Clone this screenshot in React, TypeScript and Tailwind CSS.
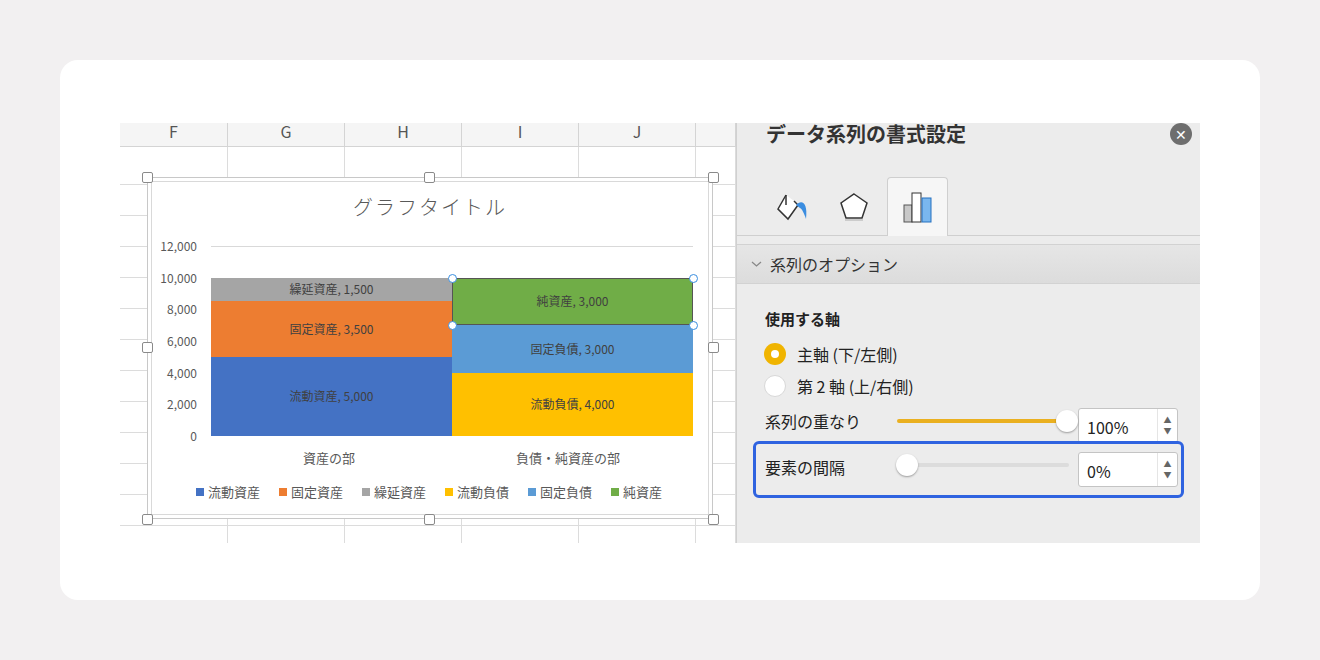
import React from "react";

const F = { fontFamily: '"Noto Sans CJK JP","Noto Sans",sans-serif' };

function Chart() {
  const y = (v: number) => 436 - (v / 2000) * 31.7;
  const segs = [
    { x: 211, w: 241, from: 0, to: 5000, c: "#4472c4", t: "流動資産, 5,000" },
    { x: 211, w: 241, from: 5000, to: 8500, c: "#ed7d31", t: "固定資産, 3,500" },
    { x: 211, w: 241, from: 8500, to: 10000, c: "#a5a5a5", t: "繰延資産, 1,500" },
    { x: 452, w: 241, from: 0, to: 4000, c: "#ffc000", t: "流動負債, 4,000" },
    { x: 452, w: 241, from: 4000, to: 7000, c: "#5b9bd5", t: "固定負債, 3,000" },
    { x: 452, w: 241, from: 7000, to: 10000, c: "#70ad47", t: "純資産, 3,000" },
  ];
  const legend = [
    ["#4472c4", "流動資産"], ["#ed7d31", "固定資産"], ["#a5a5a5", "繰延資産"],
    ["#ffc000", "流動負債"], ["#5b9bd5", "固定負債"], ["#70ad47", "純資産"],
  ];
  const ox = 120, oy = 123;
  return (
    <div className="absolute inset-0" style={F}>
      <div className="absolute bg-white border border-[#c8c8c8]" style={{ left: 147 - ox, top: 177 - oy, width: 566, height: 342 }}>
        <div className="absolute inset-[3px] border border-[#d9d9d9]" />
      </div>
      {[[147, 177], [429, 177], [713, 177], [147, 347], [713, 347], [147, 519], [429, 519], [713, 519]].map(([x, yy], i) => (
        <div key={i} className="absolute w-[11px] h-[11px] bg-white border border-[#8a8a8a] rounded-[2px]" style={{ left: x - ox - 5, top: yy - oy - 5 }} />
      ))}
      <div className="absolute text-[20px] font-light text-[#595959] tracking-[2px] whitespace-nowrap" style={{ left: 353 - ox, top: 192 - oy }}>グラフタイトル</div>
      {[12000, 10000, 8000, 6000, 4000, 2000, 0].map((v) => (
        <div key={v}>
          <div className="absolute text-[12px] text-[#595959] text-right w-[60px]" style={{ left: 137 - ox, top: y(v) - oy - 9 }}>{v.toLocaleString()}</div>
          {v > 0 && <div className="absolute h-px bg-[#d9d9d9]" style={{ left: 211 - ox, width: 482, top: y(v) - oy }} />}
        </div>
      ))}
      {segs.map((s, i) => (
        <div key={i} className="absolute flex items-center justify-center text-[12px] text-[#404040]" style={{ left: s.x - ox, width: s.w, top: y(s.to) - oy, height: y(s.from) - y(s.to), background: s.c }}>{s.t}</div>
      ))}
      <div className="absolute border border-[#555]" style={{ left: 452 - ox, width: 241, top: y(10000) - oy, height: y(7000) - y(10000) }} />
      {[[452, 278], [693, 278], [452, 325], [693, 325]].map(([x, yy], i) => (
        <div key={i} className="absolute w-[9px] h-[9px] rounded-full bg-white border-[1.5px] border-[#3a8ee0]" style={{ left: x - ox - 4.5, top: yy - oy - 4.5 }} />
      ))}
      <div className="absolute text-[13px] text-[#595959]" style={{ left: 303 - ox, top: 448 - oy }}>資産の部</div>
      <div className="absolute text-[13px] text-[#595959]" style={{ left: 516 - ox, top: 448 - oy }}>負債・純資産の部</div>
      <div className="absolute flex gap-[19px] text-[13px] text-[#595959]" style={{ left: 196 - ox, top: 482 - oy }}>
        {legend.map(([c, t]) => (
          <div key={t} className="flex items-center gap-[4px]"><span className="w-[8px] h-[8px]" style={{ background: c }} />{t}</div>
        ))}
      </div>
    </div>
  );
}

function Spinner({ v }: { v: string }) {
  return (
    <div className="w-[100px] h-[35px] bg-white border border-[#c4c4c4] rounded-[3px] flex items-center pl-[8px] text-[16px] text-[#222]">
      <span className="flex-1 pt-[4px]">{v}</span>
      <div className="w-[20px] h-full border-l border-[#e5e5e5] flex flex-col items-center justify-center gap-[3px] text-[#666] text-[8px] leading-none">
        <span>▲</span><span>▼</span>
      </div>
    </div>
  );
}

export default function App() {
  const cols = [["F", 108], ["G", 117], ["H", 117], ["I", 117], ["J", 117], ["", 40]] as const;
  return (
    <div className="w-[1320px] h-[660px] bg-[#f2f0f1] p-[60px]" style={F}>
      <div className="w-[1200px] h-[540px] bg-white rounded-[18px] px-[60px] pt-[63px]">
        <div className="flex h-[420px] w-[1080px] overflow-hidden">
          <div className="relative w-[616px] bg-white">
            <div className="flex h-[24px] bg-[#f5f5f5] border-b border-[#d4d4d4]">
              {cols.map(([c, w], i) => (
                <div key={i} className="border-r border-[#d4d4d4] text-[16px] text-[#555] flex items-start justify-center leading-[16px]" style={{ width: w }}>{c}</div>
              ))}
            </div>
            <div className="flex flex-col">
              {[38, 31, 31, 31, 31, 31, 31, 31, 31, 31, 31, 31, 31].map((h, r) => (
                <div key={r} className="flex border-b border-[#dcdcdc]" style={{ height: h }}>
                  {cols.map(([, w], i) => (<div key={i} className="border-r border-[#dcdcdc]" style={{ width: w }} />))}
                </div>
              ))}
            </div>
            <Chart />
          </div>
          <div className="w-[464px] bg-[#ececec] border-l border-[#d0d0d0] flex flex-col">
            <div className="flex items-start justify-between pl-[29px] pr-[8px] h-[54px]">
              <span className="text-[20px] font-bold text-[#333] leading-none mt-[1px]">データ系列の書式設定</span>
              <span className="w-[22px] h-[22px] rounded-full bg-[#6e6e6e] text-white flex items-center justify-center text-[14px] leading-none">✕</span>
            </div>
            <div className="flex items-end h-[59px] border-b border-[#cfcfcf] pl-[28px]">
              <div className="w-[56px] h-[56px] flex items-center justify-center">
                <svg width="38" height="36" viewBox="0 0 38 36"><path d="M12 6 L4 20 L14 30 L24 16 L20 12" fill="#fff" stroke="#333" strokeWidth="1.5" /><path d="M12 6 L12 16" stroke="#333" strokeWidth="1.5" /><path d="M22 16 C28 10 34 14 32 30 C30 24 28 20 26 19" fill="#3b8de0" /></svg>
              </div>
              <div className="w-[66px] h-[56px] flex items-center justify-center">
                <svg width="34" height="34" viewBox="0 0 34 34"><path d="M17 4 L30 13 L25 28 L9 28 L4 13 Z" fill="#fff" stroke="#333" strokeWidth="1.5" /><path d="M8 30 H26" stroke="#ccc" strokeWidth="2" /></svg>
              </div>
              <div className="w-[61px] h-[59px] bg-[#f6f6f6] border border-b-0 border-[#cfcfcf] rounded-t-[4px] flex items-center justify-center -mb-px">
                <svg width="32" height="34" viewBox="0 0 32 34"><rect x="2" y="15" width="8" height="17" fill="#c8c8c8" stroke="#555" /><rect x="10" y="3" width="9" height="29" fill="#fff" stroke="#333" /><rect x="20" y="8" width="9" height="24" fill="#7ab7ee" stroke="#2470c0" /></svg>
              </div>
            </div>
            <div className="mt-[8px] h-[40px] bg-gradient-to-b from-[#e6e6e6] to-[#dcdcdc] border-y border-[#d2d2d2] flex items-center pl-[14px] gap-[8px] text-[16px] text-[#333]">
              <svg width="11" height="8" viewBox="0 0 11 8"><path d="M1 2 L5.5 6 L10 2" fill="none" stroke="#888" strokeWidth="1.3" /></svg>系列のオプション
            </div>
            <div className="pl-[28px] pt-[24px] text-[15px] font-bold text-[#222]">使用する軸</div>
            <div className="pl-[27px] pt-[11px] flex flex-col gap-[8px] text-[16px] text-[#222]">
              <div className="flex items-center gap-[11px]"><span className="w-[22px] h-[22px] rounded-full bg-[#f0b400] flex items-center justify-center"><span className="w-[8px] h-[8px] rounded-full bg-white" /></span>主軸 (下/左側)</div>
              <div className="flex items-center gap-[11px]"><span className="w-[22px] h-[22px] rounded-full bg-white border border-[#d8d8d8]" />第 2 軸 (上/右側)</div>
            </div>
            <div className="flex items-center pl-[28px] pt-[2px] text-[16px] text-[#222]">
              <span className="w-[132px]">系列の重なり</span>
              <div className="relative w-[172px] h-[4px] bg-[#eab020] rounded-full mr-[9px]">
                <span className="absolute right-[-9px] top-[-9px] w-[22px] h-[22px] rounded-full bg-white shadow-[0_1px_2px_rgba(0,0,0,0.35)]" />
              </div>
              <div className="mt-[8px]"><Spinner v="100%" /></div>
            </div>
            <div className="mx-[16px] -mt-[2px] h-[57px] border-[3px] border-[#2f63e0] rounded-[6px] flex items-center pl-[9px] text-[16px] text-[#222]">
              <span className="w-[132px] -mt-[4px]">要素の間隔</span>
              <div className="relative w-[172px] h-[4px] bg-[#dcdcdc] rounded-full mr-[9px] -mt-[8px]">
                <span className="absolute left-[-1px] top-[-9px] w-[22px] h-[22px] rounded-full bg-white shadow-[0_1px_2px_rgba(0,0,0,0.35)]" />
              </div>
              <Spinner v="0%" />
            </div>
          </div>
        </div>
      </div>
    </div>
  );
}
